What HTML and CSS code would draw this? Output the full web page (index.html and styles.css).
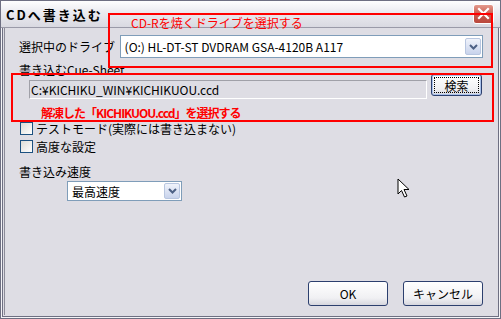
FILE: index.html
```html
<!DOCTYPE html>
<html lang="ja">
<head>
    <meta charset="UTF-8">
    <title>CDへ書き込む</title>
    <link rel="stylesheet" href="styles.css">
</head>
<body>
    <div class="window">
        <div class="titlebar">
            <span class="title">CDへ書き込む</span>
            <button class="close-btn" aria-label="閉じる">
                <svg width="13" height="13" viewBox="0 0 13 13"><path d="M2 2 L11 11 M11 2 L2 11" stroke="#fff" stroke-width="2.2" stroke-linecap="square"/></svg>
            </button>
        </div>
        <div class="client">
            <div class="row drive-row">
                <span class="label drive-label">選択中のドライブ</span>
                <div class="combo wide">
                    <span class="combo-text">(O:) HL-DT-ST DVDRAM GSA-4120B A117</span>
                    <span class="combo-arrow"><svg width="9" height="6" viewBox="0 0 9 6"><path d="M1 1 L4.5 4.5 L8 1" fill="none" stroke="#4d6185" stroke-width="2"/></svg></span>
                </div>
            </div>
            <div class="label sheet-label">書き込むCue-Sheet</div>
            <div class="row path-row">
                <div class="path-field">C:¥KICHIKU_WIN¥KICHIKUOU.ccd</div>
                <button class="btn search-btn">検索</button>
            </div>
            <label class="check first-check"><span class="box"></span>テストモード(実際には書き込まない)</label>
            <label class="check"><span class="box"></span>高度な設定</label>
            <div class="label speed-label">書き込み速度</div>
            <div class="combo speed">
                <span class="combo-text">最高速度</span>
                <span class="combo-arrow"><svg width="9" height="6" viewBox="0 0 9 6"><path d="M1 1 L4.5 4.5 L8 1" fill="none" stroke="#4d6185" stroke-width="2"/></svg></span>
            </div>
            <div class="footer">
                <button class="btn">OK</button>
                <button class="btn">キャンセル</button>
            </div>
        </div>

        <!-- red annotations drawn over the dialog -->
        <div class="note note-drive"><span class="note-text">CD-Rを焼くドライブを選択する</span></div>
        <div class="note note-sheet"><span class="note-text note-bold">解凍した「KICHIKUOU.ccd」を選択する</span></div>
        <svg class="cursor" width="14" height="22" viewBox="0 0 14 22"><path d="M1 1 L1 16 L4.5 12.5 L7.5 19 L10 18 L7 11.5 L12 11.5 Z" fill="#fff" stroke="#000" stroke-width="1"/></svg>
    </div>
</body>
</html>
```

FILE: styles.css
```css
body {
    margin: 0;
    font-family: "Noto Sans CJK JP", "DejaVu Sans", sans-serif;
    font-size: 12px;
    color: #000;
    background: #fff;
}
.window {
    position: relative;
    width: 501px;
    height: 319px;
    box-sizing: border-box;
    border: 1px solid #6e6f82;
    background: #dedde4;
    box-shadow: inset 0 0 0 1px #f4f4f7, inset 0 0 0 2px #6e6f82;
    display: flex;
    flex-direction: column;
}
.titlebar {
    height: 26px;
    flex: none;
    display: flex;
    align-items: center;
    justify-content: space-between;
    padding: 0 4px 0 5px;
    background: linear-gradient(#fefefe, #ececf1 40%, #d9d9e1);
    border-bottom: 1px solid #9a9aa8;
}
.title {
    font-weight: bold;
    font-size: 13px;
    letter-spacing: 2px;
    margin-top: 1px;
}
.close-btn {
    width: 21px;
    height: 20px;
    padding: 0;
    border: 1px solid #fff;
    border-radius: 3px;
    background: linear-gradient(#e39a8c, #c9574a 55%, #b9473c);
    display: flex;
    align-items: center;
    justify-content: center;
    margin-top: -1px;
    margin-right: 2px;
}
.client {
    flex: 1;
    display: flex;
    flex-direction: column;
    padding: 7px 14px 9px 14px;
    margin: 0 3px 3px 3px;
    border-left: 1px solid #8b8b98;
}
.row {
    display: flex;
    align-items: center;
}
.drive-label {
    width: 103px;
}
.combo {
    height: 23px;
    box-sizing: border-box;
    border: 1px solid #7f9db9;
    background: #fff;
    display: flex;
    align-items: center;
    justify-content: space-between;
    padding: 0 1px 0 4px;
}
.combo.wide {
    width: 372px;
}
.combo.speed {
    width: 115px;
    height: 20px;
    margin-left: 48px;
    margin-top: 1px;
}
.combo-text {
    font-size: 12px;
}
.combo-arrow {
    width: 16px;
    height: 17px;
    box-sizing: border-box;
    border: 1px solid #b8c6e0;
    border-radius: 2px;
    background: linear-gradient(#f0f3fb, #c8d3ec);
    display: flex;
    align-items: center;
    justify-content: center;
}
.speed .combo-arrow {
    height: 16px;
}
.sheet-label {
    margin-top: 5px;
    height: 14px;
    line-height: 14px;
}
.path-row {
    margin-top: -3px;
    justify-content: space-between;
    align-items: flex-start;
    padding-left: 10px;
    padding-right: 1px;
}
.path-field {
    width: 398px;
    height: 19px;
    margin-top: 6px;
    box-sizing: border-box;
    border-top: 1px solid #a0a0a8;
    border-left: 1px solid #a0a0a8;
    border-bottom: 1px solid #fff;
    border-right: 1px solid #fff;
    padding-left: 1px;
    line-height: 17px;
}
.btn {
    font-family: inherit;
    font-size: 12px;
    box-sizing: border-box;
    border: 1px solid #2c3f6e;
    border-radius: 3px;
    background: linear-gradient(#ffffff, #f0f0f3 70%, #d6d6de);
    padding: 0;
    color: #000;
}
.search-btn {
    width: 51px;
    height: 22px;
    outline: 1px dotted #000;
    outline-offset: -4px;
    box-shadow: inset 0 0 0 1px #a9c1ea;
}
.check {
    display: flex;
    align-items: center;
    height: 18px;
    margin-left: 1px;
}
.first-check {
    margin-top: 20px;
}
.box {
    width: 11px;
    height: 11px;
    border: 1px solid #1c5180;
    background: linear-gradient(135deg, #dcdcd6, #fff);
    margin-right: 3px;
}
.speed-label {
    margin-top: 8px;
}
.footer {
    margin-top: auto;
    display: flex;
    justify-content: flex-end;
    gap: 15px;
}
.footer .btn {
    width: 80px;
    height: 25px;
}
.note {
    position: absolute;
    border: 2px solid #ff0000;
    box-sizing: border-box;
}
.note-drive {
    left: 107px;
    top: 12px;
    width: 385px;
    height: 55px;
}
.note-drive .note-text {
    position: absolute;
    left: 21px;
    top: 1px;
}
.note-sheet {
    left: 10px;
    top: 72px;
    width: 483px;
    height: 49px;
}
.note-sheet .note-text {
    position: absolute;
    left: 28px;
    top: 31px;
}
.note-text {
    color: #ff0000;
    font-size: 12px;
    line-height: 13px;
    white-space: nowrap;
}
.note-bold {
    font-weight: bold;
    letter-spacing: -1px;
}
.cursor {
    position: absolute;
    left: 396px;
    top: 177px;
}
```
